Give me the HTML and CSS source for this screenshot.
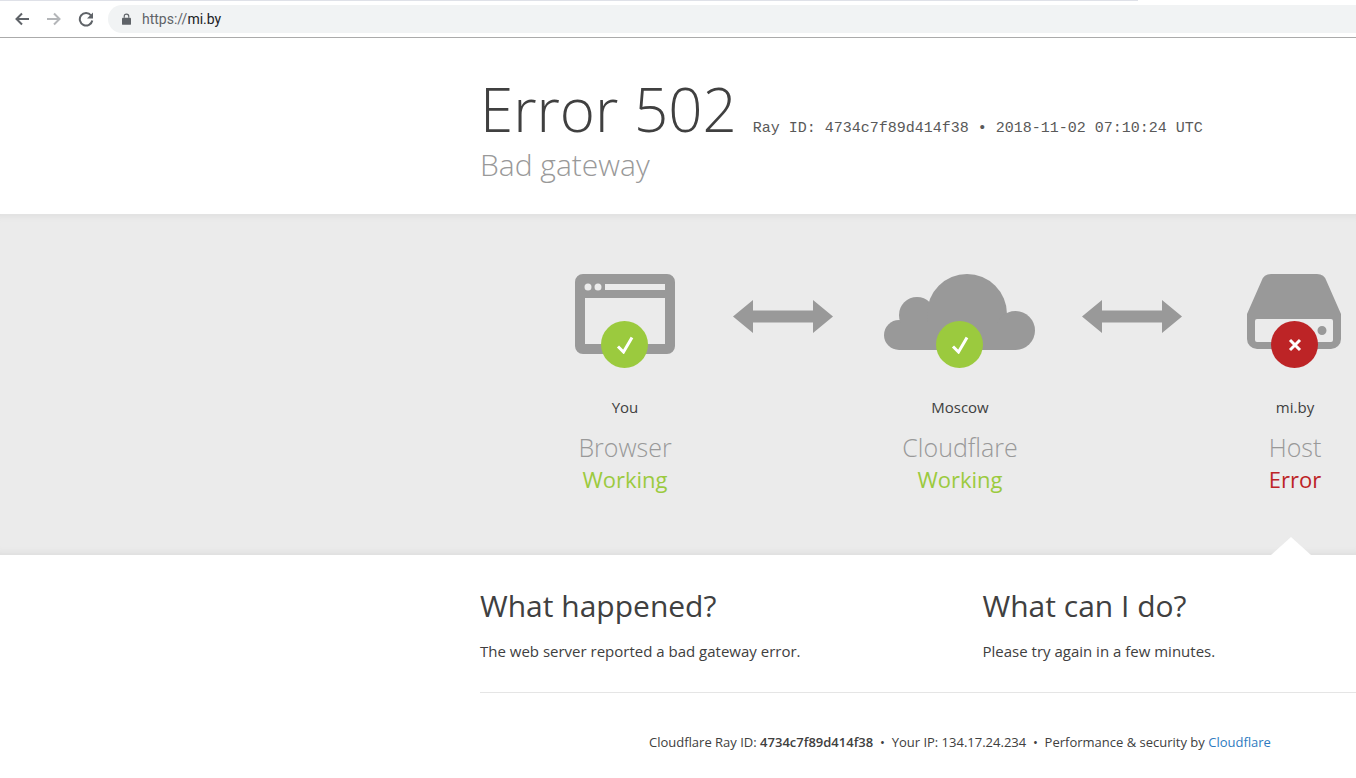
FILE: index.html
```html
<!DOCTYPE html>
<html lang="en">
<head>
    <meta charset="UTF-8">
    <meta name="viewport" content="width=device-width, initial-scale=1.0">
    <title>mi.by | 502: Bad gateway</title>
    <link rel="stylesheet" href="styles.css">
</head>
<body>
    <!-- Browser toolbar -->
    <div class="toolbar">
        <span class="load-bar"></span>
        <svg class="nav-icon" viewBox="0 0 16 16"><path d="M15 8H3M8 2.500 2.500 8 8 13.500" fill="none" stroke="#5f6368" stroke-width="2"/></svg>
        <svg class="nav-icon" viewBox="0 0 16 16"><path d="M1 8h12M8 2.500 13.500 8 8 13.500" fill="none" stroke="#b4b6b9" stroke-width="2"/></svg>
        <svg class="nav-icon" viewBox="0 0 16 16"><path d="M13 4.300A6.300 6.300 0 1 0 14.300 9.500" fill="none" stroke="#5f6368" stroke-width="2"/><path d="M15 1.500v6h-6z" fill="#5f6368"/></svg>
        <div class="address-bar">
            <svg class="lock-icon" viewBox="0 0 10 13"><path d="M2.500 5V3.500a2.500 2.500 0 0 1 5 0V5" fill="none" stroke="#5f6368" stroke-width="1.300"/><rect y="5" width="10" height="8" rx="1" fill="#5f6368"/></svg>
            <span class="url"><span class="url-scheme">https://</span>mi.by</span>
        </div>
    </div>

    <!-- Error heading -->
    <header class="error-header">
        <h1><span class="error-code">Error 502</span><span class="ray-line">Ray ID: 4734c7f89d414f38 • 2018-11-02 07:10:24 UTC</span></h1>
        <h2>Bad gateway</h2>
    </header>

    <!-- Status diagram -->
    <section class="status-band">
        <div class="status-item">
            <div class="status-icon">
                <svg class="device" viewBox="0 0 100 80">
                    <path fill-rule="evenodd" fill="#999" d="M8 0h84a8 8 0 0 1 8 8v64a8 8 0 0 1-8 8H8a8 8 0 0 1-8-8V8a8 8 0 0 1 8-8zM10 24v46h80V24zM30 10v6h60v-6zM13 9.500a3.500 3.500 0 1 0 0 7 3.500 3.500 0 0 0 0-7zM23 9.500a3.500 3.500 0 1 0 0 7 3.500 3.500 0 0 0 0-7z"/>
                </svg>
                <span class="badge badge-ok"><svg viewBox="0 0 18 18"><path d="M2 10.500 7.500 16 16 1.500" fill="none" stroke="#fff" stroke-width="3"/></svg></span>
            </div>
            <div class="location">You</div>
            <div class="item-name">Browser</div>
            <div class="item-state state-ok">Working</div>
        </div>
        <div class="status-item">
            <div class="status-icon">
                <svg class="device device-cloud" viewBox="0 0 151 76">
                    <g fill="#999">
                        <circle cx="15" cy="61" r="15"/>
                        <circle cx="33" cy="41" r="18"/>
                        <circle cx="83" cy="40" r="40"/>
                        <circle cx="131.500" cy="56.500" r="19.500"/>
                        <rect x="15" y="50" width="117" height="26"/>
                    </g>
                </svg>
                <span class="badge badge-ok"><svg viewBox="0 0 18 18"><path d="M2 10.500 7.500 16 16 1.500" fill="none" stroke="#fff" stroke-width="3"/></svg></span>
            </div>
            <div class="location">Moscow</div>
            <div class="item-name">Cloudflare</div>
            <div class="item-state state-ok">Working</div>
        </div>
        <div class="status-item status-item-host">
            <div class="status-icon">
                <svg class="device device-host" viewBox="0 0 94 75">
                    <path fill-rule="evenodd" fill="#999" d="M24 0h46a10 10 0 0 1 9.500 7L94 40v25a10 10 0 0 1-10 10H10A10 10 0 0 1 0 65V40L14.500 7A10 10 0 0 1 24 0zM8 47v19a2 2 0 0 0 2 2h74a2 2 0 0 0 2-2V47a2 2 0 0 0-2-2H10a2 2 0 0 0-2 2zM75 52a4.500 4.500 0 1 0 0 9 4.500 4.500 0 0 0 0-9z"/>
                </svg>
                <span class="badge badge-error"><svg viewBox="0 0 18 18"><path d="M4 4l10 10M14 4 4 14" fill="none" stroke="#fff" stroke-width="3"/></svg></span>
            </div>
            <div class="location">mi.by</div>
            <div class="item-name">Host</div>
            <div class="item-state state-error">Error</div>
        </div>
        <svg class="link-arrow link-arrow-first" viewBox="0 0 100 33"><path fill="#999" d="M0 16.500 20 0v10.500h60V0l20 16.500L80 33V22.500H20V33z"/></svg>
        <svg class="link-arrow link-arrow-second" viewBox="0 0 100 33"><path fill="#999" d="M0 16.500 20 0v10.500h60V0l20 16.500L80 33V22.500H20V33z"/></svg>
        <span class="pointer"></span>
    </section>

    <!-- Explanation -->
    <section class="info">
        <div class="info-column info-column-left">
            <h3>What happened?</h3>
            <p>The web server reported a bad gateway error.</p>
        </div>
        <div class="info-column">
            <h3>What can I do?</h3>
            <p>Please try again in a few minutes.</p>
        </div>
    </section>

    <footer class="page-footer">
        <span>Cloudflare Ray ID: <strong>4734c7f89d414f38</strong></span>
        <span class="dot">•</span>
        <span>Your IP: 134.17.24.234</span>
        <span class="dot">•</span>
        <span>Performance &amp; security by <a href="#">Cloudflare</a></span>
    </footer>
</body>
</html>
```

FILE: styles.css
```css
* {
    margin: 0;
    padding: 0;
    box-sizing: border-box;
}

body {
    height: 100vh;
    overflow: hidden;
    background-color: #fff;
    color: #404040;
    font-family: "Open Sans", sans-serif;
}

.toolbar {
    position: relative;
    height: 38px;
    display: flex;
    align-items: center;
    padding: 0 0 0 14px;
    gap: 16px;
    border-bottom: 1px solid #ababab;
}

.load-bar {
    position: absolute;
    left: 0;
    top: 0;
    width: 1138px;
    height: 1px;
    background-color: #dfe1e8;
}

.nav-icon {
    width: 16px;
    height: 16px;
    flex: none;
}

.address-bar {
    flex: 1;
    height: 28px;
    margin-left: -2px;
    padding-left: 14px;
    display: flex;
    align-items: center;
    gap: 11px;
    background-color: #f1f3f4;
    border-radius: 14px 0 0 14px;
}

.lock-icon {
    width: 9px;
    height: 12px;
}

.url {
    font-family: Roboto, sans-serif;
    font-size: 14px;
    color: #202124;
}

.url-scheme {
    color: #5f6368;
}

.error-header {
    height: 176px;
    padding: 35px 0 0 480px;
}

h1 {
    display: flex;
    align-items: baseline;
    height: 72px;
    white-space: nowrap;
    font-weight: 300;
}

.error-code {
    font-size: 60px;
    line-height: 73px;
    font-weight: 300;
}

.ray-line {
    margin-left: 16px;
    font-family: "Liberation Mono", monospace;
    font-size: 15px;
    font-weight: 400;
    color: #595959;
}

h2 {
    font-size: 30px;
    line-height: 40px;
    font-weight: 300;
    color: #999;
}

.status-band {
    position: relative;
    height: 341px;
    padding: 60px 0 0 457.500px;
    display: grid;
    grid-template-columns: 335px 335px 1fr;
    background-color: #ebebeb;
    box-shadow: inset 0 8px 6px -6px #dedede, inset 0 -8px 6px -6px #dcdcdc;
}

.status-item {
    text-align: center;
    white-space: nowrap;
}

/* last column is cut by the window, keep its centre where a full column has it */
.status-item-host {
    padding-left: 106.500px;
}

.status-icon {
    position: relative;
    height: 94px;
    display: flex;
    justify-content: center;
}

.device {
    width: 100px;
    height: 80px;
}

.device-cloud {
    width: 151px;
    height: 76px;
    margin-right: 1px;
}

.device-host {
    width: 94px;
    height: 75px;
    margin-right: 2px;
}

.badge {
    position: absolute;
    left: 50%;
    top: 47px;
    width: 47px;
    height: 47px;
    margin-left: -24px;
    border-radius: 50%;
    display: flex;
    align-items: center;
    justify-content: center;
}

.badge svg {
    width: 18px;
    height: 18px;
}

.badge-ok {
    background-color: #9bca3e;
}

.badge-error {
    background-color: #bd2426;
}

.location {
    margin-top: 28px;
    font-size: 15px;
    line-height: 22px;
}

.item-name {
    margin-top: 14px;
    font-size: 25px;
    line-height: 31px;
    font-weight: 300;
    color: #999;
}

.item-state {
    font-size: 22px;
    line-height: 32px;
}

.state-ok {
    color: #9bca3e;
}

.state-error {
    color: #bd2426;
}

.link-arrow {
    position: absolute;
    top: 86px;
    width: 100px;
    height: 33px;
}

.link-arrow-first {
    left: 733px;
}

.link-arrow-second {
    left: 1082px;
}

.pointer {
    position: absolute;
    left: 1271px;
    bottom: 0;
    width: 0;
    height: 0;
    border-left: 20px solid transparent;
    border-right: 20px solid transparent;
    border-bottom: 18px solid #fff;
}

.info {
    margin-left: 480px;
    height: 138px;
    padding-top: 30px;
    display: flex;
    border-bottom: 1px solid #e5e5e5;
}

.info-column-left {
    width: 502.500px;
}

h3 {
    font-size: 30px;
    line-height: 42px;
    font-weight: 400;
}

.info-column p {
    margin-top: 13px;
    font-size: 15px;
    line-height: 22px;
}

.page-footer {
    margin-left: 649px;
    padding-top: 39px;
    display: flex;
    gap: 6.750px;
    font-size: 13px;
    line-height: 20px;
    white-space: nowrap;
}

.page-footer strong {
    font-weight: 600;
}

.page-footer a {
    color: #2f7bbf;
    text-decoration: none;
}
```
